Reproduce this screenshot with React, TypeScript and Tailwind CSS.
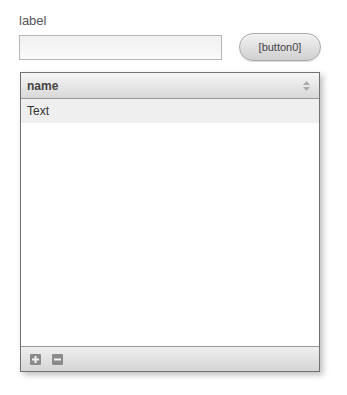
import React from 'react';

const App: React.FC = () => {
  return (
    <div className="w-[347px] h-[395px] bg-white pl-[19px] pt-[13px] font-['Liberation_Sans',Arial,sans-serif]">
      <div className="text-[13px] leading-[16px] text-[#555]">label</div>
      <div className="flex items-center mt-[4px] h-[28px]">
        <input
          className="w-[203px] h-[25px] border border-[#b5b5b5] bg-gradient-to-b from-[#f0f0f0] to-[#fbfbfb] outline-none"
          readOnly
        />
        <button className="ml-[17px] w-[82px] h-[28px] rounded-full border border-[#aaa] bg-gradient-to-b from-[#f2f2f2] to-[#d0d0d0] text-[11px] text-[#444] shadow-[0_1px_1px_rgba(0,0,0,0.15)]">
          [button0]
        </button>
      </div>
      <div className="mt-[11px] ml-[1px] w-[300px] h-[300px] border border-[#717171] flex flex-col bg-white shadow-[3px_3px_6px_rgba(0,0,0,0.25)]">
        <div className="h-[26px] flex items-center justify-between px-[6px] border-b border-[#999] bg-gradient-to-b from-[#f6f6f6] to-[#d8d8d8]">
          <span className="text-[12px] font-bold text-[#444]">name</span>
          <svg width="7" height="10" viewBox="0 0 7 10" className="mr-[3px]">
            <path d="M3.5 0 L7 4 L0 4 Z" fill="#aaa" />
            <path d="M3.5 10 L7 6 L0 6 Z" fill="#aaa" />
          </svg>
        </div>
        <div className="h-[24px] flex items-center px-[6px] bg-[#efefef] text-[12px] text-[#333]">Text</div>
        <div className="flex-1" />
        <div className="h-[25px] border-t border-[#999] bg-gradient-to-b from-[#efefef] to-[#d5d5d5] flex items-center gap-[11px] pl-[9px]">
          <svg width="11" height="11" viewBox="0 0 11 11">
            <rect width="11" height="11" rx="1" fill="#8a8a8a" />
            <rect x="2" y="4.5" width="7" height="2" fill="#f2f2f2" />
            <rect x="4.5" y="2" width="2" height="7" fill="#f2f2f2" />
          </svg>
          <svg width="11" height="11" viewBox="0 0 11 11">
            <rect width="11" height="11" rx="1" fill="#8a8a8a" />
            <rect x="2" y="4.5" width="7" height="2" fill="#f2f2f2" />
          </svg>
        </div>
      </div>
    </div>
  );
};

export default App;
